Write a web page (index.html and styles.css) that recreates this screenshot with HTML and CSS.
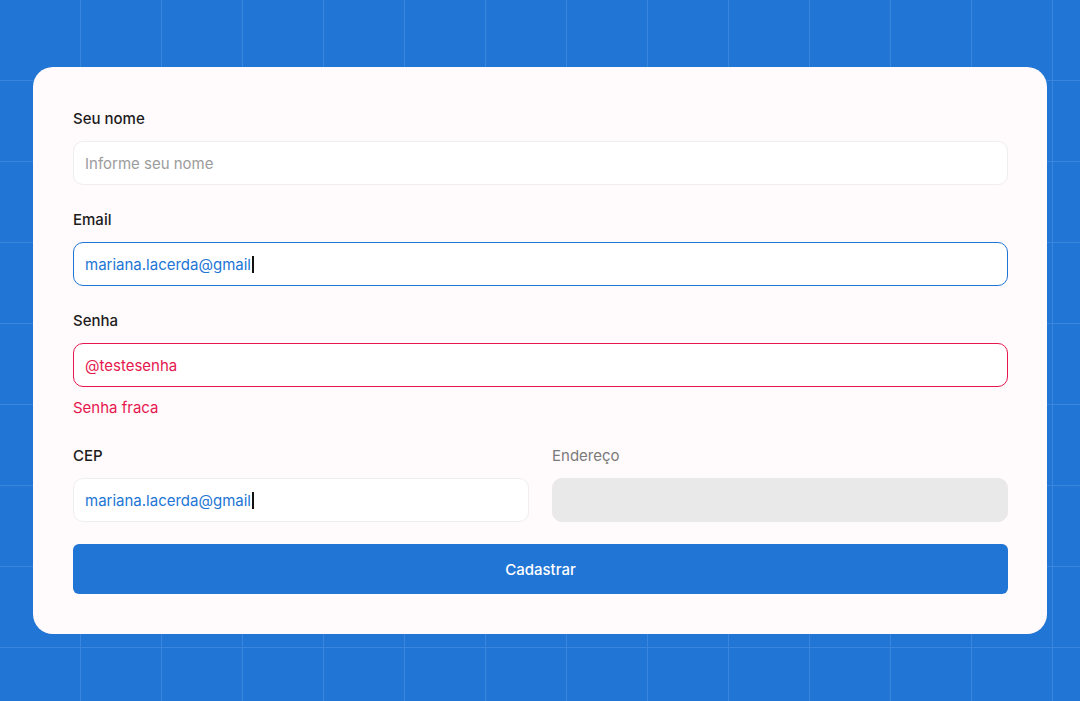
FILE: index.html
```html
<!DOCTYPE html>
<html lang="pt-BR">
<head>
<meta charset="utf-8">
<title>Cadastro</title>
<link rel="stylesheet" href="styles.css">
</head>
<body>
<form class="card">
  <div class="field">
    <label class="label">Seu nome</label>
    <div class="input"><span class="placeholder">Informe seu nome</span></div>
  </div>
  <div class="field">
    <label class="label">Email</label>
    <div class="input focus"><span>mariana.lacerda@gmail</span><span class="caret"></span></div>
  </div>
  <div class="field">
    <label class="label">Senha</label>
    <div class="input error"><span>@testesenha</span></div>
    <p class="error-msg">Senha fraca</p>
  </div>
  <div class="row">
    <div class="field">
      <label class="label">CEP</label>
      <div class="input filled"><span>mariana.lacerda@gmail</span><span class="caret"></span></div>
    </div>
    <div class="field">
      <label class="label muted">Endereço</label>
      <div class="input disabled"></div>
    </div>
  </div>
  <button type="button" class="button">Cadastrar</button>
</form>
</body>
</html>
```
FILE: styles.css
```css
* { box-sizing: border-box; }
html, body { margin: 0; height: 100%; }
body {
  padding: 67px 33px;
  background-color: #2175d5;
  background-image:
    linear-gradient(to right, transparent 80px, #3a86dd 80px, #3a86dd 82px, transparent 82px),
    linear-gradient(to bottom, transparent 80px, #3a86dd 80px, #3a86dd 82px, transparent 82px);
  background-size: 81px 81px;
  font-family: Inter, "Liberation Sans", sans-serif;
}
.card {
  background: #fffafb;
  border-radius: 20px;
  padding: 41px 39px 40px 40px;
  height: 567px;
  display: flex;
  flex-direction: column;
}
.field { display: flex; flex-direction: column; margin-bottom: 24px; }
.label {
  font-size: 15px;
  line-height: 21px;
  font-weight: 500;
  color: #1c1c1c;
  margin-bottom: 12px;
}
.label.muted { color: #7a7a7a; font-weight: 400; }
.input {
  height: 44px;
  border: 1px solid #eeeeee;
  border-radius: 10px;
  background: #ffffff;
  padding: 0 11px;
  display: flex;
  align-items: center;
  font-size: 15px;
  color: #2175d5;
}
.placeholder { color: #9c9c9c; }
.input.focus { border-color: #2175d5; }
.input.error { border-color: #e6174f; color: #e6174f; }
.input.disabled { background: #e9e9e9; border-color: #e9e9e9; }
.caret {
  display: inline-block;
  width: 1.5px;
  height: 17px;
  background: #111;
  margin-left: 1px;
}
.error-msg {
  margin: 11px 0 3px;
  font-size: 15px;
  line-height: 20px;
  color: #e6174f;
}
.row {
  display: grid;
  grid-template-columns: 1fr 1fr;
  gap: 23px;
}
.row .field { margin-bottom: 22px; }
.button {
  height: 50px;
  border: none;
  border-radius: 6px;
  background: #2175d5;
  color: #fff;
  font-family: inherit;
  font-size: 15px;
  font-weight: 500;
}
```
